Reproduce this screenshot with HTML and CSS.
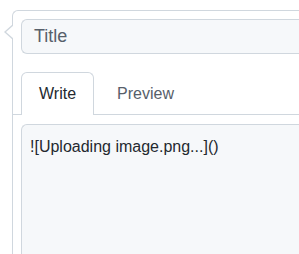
FILE: index.html
```html
<!DOCTYPE html>
<html lang="en">
<head>
    <meta charset="UTF-8">
    <meta name="viewport" content="width=device-width, initial-scale=1.0">
    <title>New issue</title>
    <link rel="stylesheet" href="styles.css">
</head>
<body>
    <div class="comment-box">
        <div class="title-input">Title</div>

        <div class="tabs">
            <div class="tab active">Write</div>
            <div class="tab">Preview</div>
        </div>

        <div class="editor">![Uploading image.png...]()</div>
    </div>
</body>
</html>
```

FILE: styles.css
```css
html, body {
    height: 100%;
}

body {
    margin: 0;
    font-family: "Liberation Sans", Arial, sans-serif;
    background-color: #fff;
    overflow: hidden;
}

/* the box is cut off on the right and bottom, so no border there */
.comment-box {
    position: relative;
    box-sizing: border-box;
    display: flex;
    flex-direction: column;
    height: calc(100% - 10px);
    margin: 10px 0 0 12px;
    padding: 8px 0 0 8px;
    border: 1px solid #d0d7de;
    border-right: 0;
    border-bottom: 0;
    border-radius: 6px 0 0 0;
    background-color: #fff;
}

/* little pointer on the left edge */
.comment-box::before,
.comment-box::after {
    content: "";
    position: absolute;
    width: 0;
    height: 0;
    border-style: solid;
    border-color: transparent;
}

.comment-box::before {
    top: 13px;
    right: 100%;
    border-width: 8px 9px 8px 8px;
    border-right-color: #d0d7de;
}

.comment-box::after {
    top: 14px;
    right: calc(100% - 1px);
    border-width: 7px 8px 7px 7px;
    border-right-color: #fff;
}

.title-input {
    box-sizing: border-box;
    height: 35px;
    padding: 0 12px;
    border: 1px solid #d0d7de;
    border-right: 0;
    border-radius: 6px 0 0 6px;
    background-color: #f6f8fa;
    font-size: 18px;
    line-height: 33px;
    color: #57606a;
}

.tabs {
    display: flex;
    gap: 5px;
    margin: 18px 0 0 -8px;
    padding-left: 8px;
    border-bottom: 1px solid #d0d7de;
}

.tab {
    box-sizing: border-box;
    height: 43px;
    margin-bottom: -1px;
    padding: 0 17px;
    border: 1px solid transparent;
    border-bottom: 0;
    border-radius: 6px 6px 0 0;
    font-size: 16px;
    line-height: 41px;
    color: #57606a;
}

.tab.active {
    border-color: #d0d7de;
    background-color: #fff;
    color: #24292f;
}

.editor {
    flex: 1;
    margin-top: 9px;
    padding: 10px 8px;
    border: 1px solid #d0d7de;
    border-right: 0;
    border-bottom: 0;
    border-radius: 6px 0 0 0;
    background-color: #f6f8fa;
    font-size: 16px;
    line-height: 24px;
    color: #24292f;
}
```
